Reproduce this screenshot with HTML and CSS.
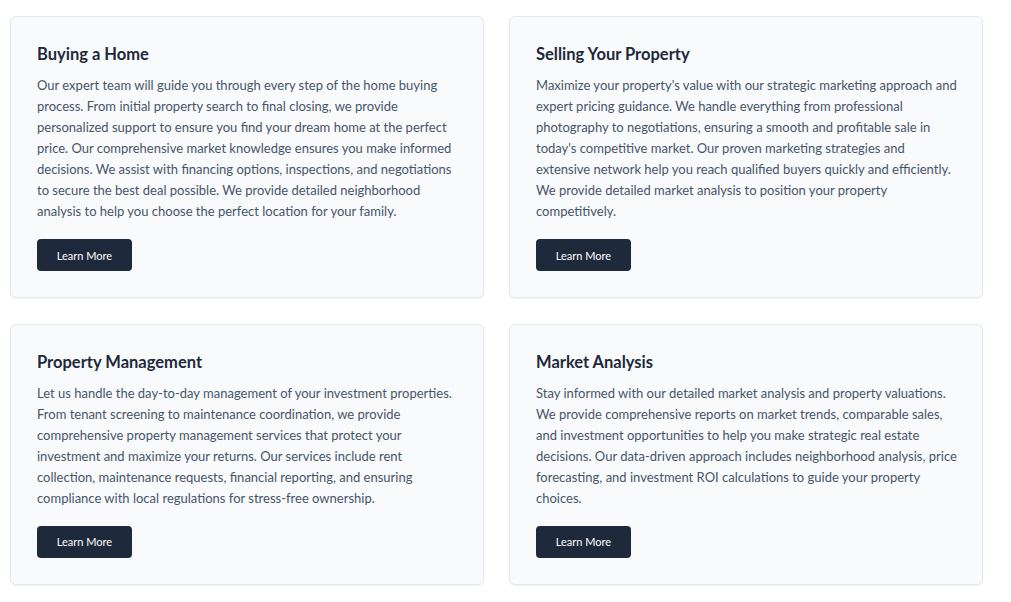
FILE: index.html
```html
<!DOCTYPE html>
<html lang="en">
<head>
<meta charset="utf-8">
<link rel="stylesheet" href="styles.css">
</head>
<body>
<div class="grid">
  <div class="card">
    <h3 class="title">Buying a Home</h3>
    <p class="text">Our expert team will guide you through every step of the home buying process. From initial property search to final closing, we provide personalized support to ensure you find your dream home at the perfect price. Our comprehensive market knowledge ensures you make informed decisions. We assist with financing options, inspections, and negotiations to secure the best deal possible. We provide detailed neighborhood analysis to help you choose the perfect location for your family.</p>
    <button class="btn">Learn More</button>
  </div>
  <div class="card">
    <h3 class="title">Selling Your Property</h3>
    <p class="text">Maximize your property's value with our strategic marketing approach and expert pricing guidance. We handle everything from professional photography to negotiations, ensuring a smooth and profitable sale in today's competitive market. Our proven marketing strategies and extensive network help you reach qualified buyers quickly and efficiently. We provide detailed market analysis to position your property competitively.</p>
    <button class="btn">Learn More</button>
  </div>
  <div class="card">
    <h3 class="title">Property Management</h3>
    <p class="text">Let us handle the day-to-day management of your investment properties. From tenant screening to maintenance coordination, we provide comprehensive property management services that protect your investment and maximize your returns. Our services include rent collection, maintenance requests, financial reporting, and ensuring compliance with local regulations for stress-free ownership.</p>
    <button class="btn">Learn More</button>
  </div>
  <div class="card">
    <h3 class="title">Market Analysis</h3>
    <p class="text">Stay informed with our detailed market analysis and property valuations. We provide comprehensive reports on market trends, comparable sales, and investment opportunities to help you make strategic real estate decisions. Our data-driven approach includes neighborhood analysis, price forecasting, and investment ROI calculations to guide your property choices.</p>
    <button class="btn">Learn More</button>
  </div>
</div>
</body>
</html>
```

FILE: styles.css
```css
* { box-sizing: border-box; }
html, body { margin: 0; background: #ffffff; }
body {
  font-family: "Lato", "Noto Sans", sans-serif;
  padding: 16px 10px;
}
.grid {
  display: grid;
  grid-template-columns: 474px 474px;
  column-gap: 25px;
  row-gap: 25.6px;
}
.card {
  background: #f8fafc;
  border: 1px solid #e2e8f0;
  border-radius: 6px;
  box-shadow: 0 1px 2px rgba(15, 23, 42, 0.06);
  padding: 25px 23px 26px 26px;
  display: flex;
  flex-direction: column;
  align-items: flex-start;
}
.title {
  margin: 0;
  font-size: 16.5px;
  line-height: 24px;
  font-weight: 700;
  color: #1e293b;
}
.text {
  margin: 9px 0 0 0;
  font-size: 13px;
  line-height: 21px;
  color: #475569;
}
.btn {
  margin-top: 17px;
  background: #1e293b;
  color: #ffffff;
  border: none;
  border-radius: 4px;
  width: 95px;
  height: 32px;
  font-family: "Lato", "Noto Sans", sans-serif;
  font-size: 11px;
  padding: 0;
}
```
